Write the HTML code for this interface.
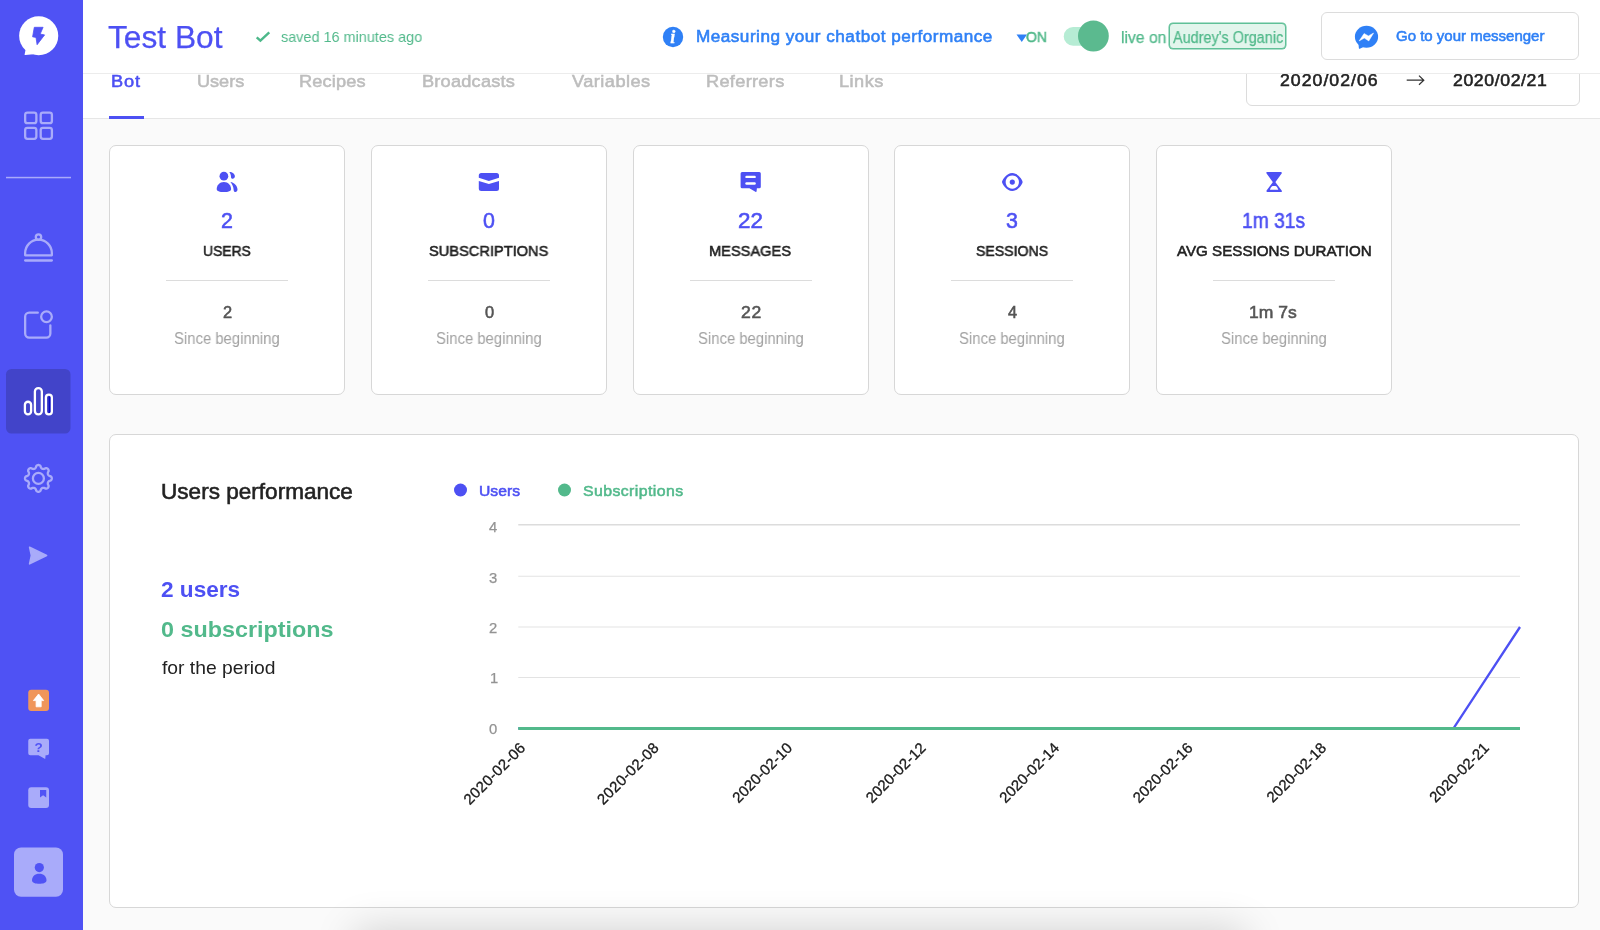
<!DOCTYPE html>
<html lang="en">
<head>
<meta charset="utf-8">
<title>Test Bot - Analytics</title>
<style>
*{box-sizing:border-box;margin:0;padding:0}
html,body{width:1600px;height:930px;overflow:hidden;background:#fafafa;font-family:"Liberation Sans",sans-serif;color:#222}
.abs,.t{position:absolute}
.t{white-space:nowrap;line-height:1;transform-origin:0 0;will-change:transform}
.m{-webkit-text-stroke:0.55px currentColor}
.l{-webkit-text-stroke:0.25px currentColor}
.b{font-weight:700}
#sidebar{position:absolute;left:0;top:0;width:83px;height:930px;background:#4f52f4}
#header{position:absolute;left:83px;top:0;width:1517px;height:74px;background:#fff;border-bottom:1px solid #ececec;z-index:5}
#tabs{position:absolute;left:83px;top:74px;width:1517px;height:45px;background:#fff;border-bottom:1px solid #e6e6e6}
.pri{color:#4d50f3}
.grn{color:#52b98b}
.blu{color:#2f80f6}
.gry{color:#bdbdbd}
.card{position:absolute;top:145px;width:236px;height:250px;background:#fff;border:1px solid #d7d7d7;border-radius:7px}
.card .hr{position:absolute;left:56px;top:134px;width:122px;height:1px;background:#dcdcdc}
#panel{position:absolute;left:109px;top:434px;width:1470px;height:474px;background:#fff;border:1px solid #d7d7d7;border-radius:7px}
</style>
</head>
<body>

<div id="sidebar">
<svg class="abs" style="left:0;top:0;will-change:transform" width="83" height="930" viewBox="0 0 83 930">
  <!-- logo -->
  <circle cx="38.7" cy="35.7" r="19.55" fill="#fff"/>
  <path d="M25.6,49.5 L24.6,54.4 Q24.5,55.2 25.4,55.1 L33.5,54.3 Z" fill="#fff"/>
  <path d="M34.3,27.3 H43.1 L40.15,34.05 L44.6,34.9 L37.1,44.7 L36,37.4 L32.6,36.85 Z" fill="#5053f5" stroke="#5053f5" stroke-width="0.8" stroke-linejoin="round"/>
  <!-- grid -->
  <g fill="none" stroke="#a9abfa" stroke-width="2.3">
    <rect x="25.15" y="112.65" width="11.2" height="10.5" rx="2.2"/>
    <rect x="40.7" y="112.65" width="11.2" height="10.5" rx="2.2"/>
    <rect x="25.15" y="127.9" width="11.2" height="10.9" rx="2.2"/>
    <rect x="40.7" y="127.9" width="11.2" height="10.9" rx="2.2"/>
  </g>
  <rect x="6" y="176.8" width="65" height="1.5" fill="#a9abfa"/>
  <!-- cloche -->
  <g fill="none" stroke="#a9abfa" stroke-width="2.3" stroke-linecap="round" stroke-linejoin="round">
    <path d="M25.15,255.35 V253 A13.35,13.35 0 0 1 51.85,253 V255.35 Z"/>
    <circle cx="38.5" cy="237.1" r="2.7"/>
    <path d="M25.15,260.5 H51.85"/>
  </g>
  <!-- notification square -->
  <g fill="none" stroke="#a9abfa" stroke-width="2.3" stroke-linecap="round">
    <path d="M37.8,312.65 H29.15 a4,4 0 0 0 -4,4 V333.6 a4,4 0 0 0 4,4 H46.35 a4,4 0 0 0 4,-4 V325.3"/>
    <circle cx="46.5" cy="316.75" r="5.35"/>
  </g>
  <!-- active analytics -->
  <rect x="6" y="369" width="64.5" height="64.5" rx="5.5" fill="#4244c9"/>
  <rect x="48.6" y="396.5" width="2.2" height="17" fill="#0a0ac4"/>
  <g fill="none" stroke="#fff" stroke-width="2.3">
    <rect x="24.9" y="401.75" width="6.2" height="12.7" rx="3.1"/>
    <rect x="34.9" y="388.05" width="6.95" height="26.4" rx="3.45"/>
    <rect x="45.9" y="394.65" width="5.95" height="19.8" rx="2.95"/>
  </g>
  <!-- gear -->
  <path d="M51.80,478.40 L51.78,478.75 L51.70,479.10 L51.58,479.44 L51.41,479.77 L51.18,480.08 L50.89,480.38 L50.48,480.64 L49.66,480.79 L49.25,481.00 L48.94,481.22 L48.68,481.45 L48.46,481.67 L48.28,481.90 L48.13,482.13 L48.01,482.38 L47.92,482.64 L47.86,482.91 L47.83,483.20 L47.82,483.52 L47.85,483.86 L47.91,484.23 L48.06,484.67 L48.53,485.36 L48.63,485.83 L48.63,486.25 L48.56,486.63 L48.45,486.99 L48.30,487.31 L48.11,487.61 L47.88,487.88 L47.61,488.11 L47.31,488.30 L46.99,488.45 L46.63,488.56 L46.25,488.63 L45.83,488.63 L45.36,488.53 L44.67,488.06 L44.23,487.91 L43.86,487.85 L43.52,487.82 L43.20,487.83 L42.91,487.86 L42.64,487.92 L42.38,488.01 L42.13,488.13 L41.90,488.28 L41.67,488.46 L41.45,488.68 L41.22,488.94 L41.00,489.25 L40.79,489.66 L40.64,490.48 L40.38,490.89 L40.08,491.18 L39.77,491.41 L39.44,491.58 L39.10,491.70 L38.75,491.78 L38.40,491.80 L38.05,491.78 L37.70,491.70 L37.36,491.58 L37.03,491.41 L36.72,491.18 L36.42,490.89 L36.16,490.48 L36.01,489.66 L35.80,489.25 L35.58,488.94 L35.35,488.68 L35.13,488.46 L34.90,488.28 L34.67,488.13 L34.42,488.01 L34.16,487.92 L33.89,487.86 L33.60,487.83 L33.28,487.82 L32.94,487.85 L32.57,487.91 L32.13,488.06 L31.44,488.53 L30.97,488.63 L30.55,488.63 L30.17,488.56 L29.81,488.45 L29.49,488.30 L29.19,488.11 L28.92,487.88 L28.69,487.61 L28.50,487.31 L28.35,486.99 L28.24,486.63 L28.17,486.25 L28.17,485.83 L28.27,485.36 L28.74,484.67 L28.89,484.23 L28.95,483.86 L28.98,483.52 L28.97,483.20 L28.94,482.91 L28.88,482.64 L28.79,482.38 L28.67,482.13 L28.52,481.90 L28.34,481.67 L28.12,481.45 L27.86,481.22 L27.55,481.00 L27.14,480.79 L26.32,480.64 L25.91,480.38 L25.62,480.08 L25.39,479.77 L25.22,479.44 L25.10,479.10 L25.02,478.75 L25.00,478.40 L25.02,478.05 L25.10,477.70 L25.22,477.36 L25.39,477.03 L25.62,476.72 L25.91,476.42 L26.32,476.16 L27.14,476.01 L27.55,475.80 L27.86,475.58 L28.12,475.35 L28.34,475.13 L28.52,474.90 L28.67,474.67 L28.79,474.42 L28.88,474.16 L28.94,473.89 L28.97,473.60 L28.98,473.28 L28.95,472.94 L28.89,472.57 L28.74,472.13 L28.27,471.44 L28.17,470.97 L28.17,470.55 L28.24,470.17 L28.35,469.81 L28.50,469.49 L28.69,469.19 L28.92,468.92 L29.19,468.69 L29.49,468.50 L29.81,468.35 L30.17,468.24 L30.55,468.17 L30.97,468.17 L31.44,468.27 L32.13,468.74 L32.57,468.89 L32.94,468.95 L33.28,468.98 L33.60,468.97 L33.89,468.94 L34.16,468.88 L34.42,468.79 L34.67,468.67 L34.90,468.52 L35.13,468.34 L35.35,468.12 L35.58,467.86 L35.80,467.55 L36.01,467.14 L36.16,466.32 L36.42,465.91 L36.72,465.62 L37.03,465.39 L37.36,465.22 L37.70,465.10 L38.05,465.02 L38.40,465.00 L38.75,465.02 L39.10,465.10 L39.44,465.22 L39.77,465.39 L40.08,465.62 L40.38,465.91 L40.64,466.32 L40.79,467.14 L41.00,467.55 L41.22,467.86 L41.45,468.12 L41.67,468.34 L41.90,468.52 L42.13,468.67 L42.38,468.79 L42.64,468.88 L42.91,468.94 L43.20,468.97 L43.52,468.98 L43.86,468.95 L44.23,468.89 L44.67,468.74 L45.36,468.27 L45.83,468.17 L46.25,468.17 L46.63,468.24 L46.99,468.35 L47.31,468.50 L47.61,468.69 L47.88,468.92 L48.11,469.19 L48.30,469.49 L48.45,469.81 L48.56,470.17 L48.63,470.55 L48.63,470.97 L48.53,471.44 L48.06,472.13 L47.91,472.57 L47.85,472.94 L47.82,473.28 L47.83,473.60 L47.86,473.89 L47.92,474.16 L48.01,474.42 L48.13,474.67 L48.28,474.90 L48.46,475.13 L48.68,475.35 L48.94,475.58 L49.25,475.80 L49.66,476.01 L50.48,476.16 L50.89,476.42 L51.18,476.72 L51.41,477.03 L51.58,477.36 L51.70,477.70 L51.78,478.05 Z" fill="none" stroke="#a9abfa" stroke-width="2.3" stroke-linejoin="round"/>
  <circle cx="38.4" cy="478.4" r="5.5" fill="none" stroke="#a9abfa" stroke-width="2.3"/>
  <!-- play -->
  <path d="M29.6,547.2 L46.6,555.5 L29.6,563.8 L31.4,555.5 Z" fill="#a9abfa" stroke="#a9abfa" stroke-width="1.6" stroke-linejoin="round"/>
  <!-- upgrade -->
  <rect x="28.25" y="689.75" width="20.75" height="21.25" rx="3" fill="#f0965a"/>
  <path d="M38.6,694 L43.7,700.6 H41.2 V706.8 H36.1 V700.6 H33.4 Z" fill="#fff" stroke="#fff" stroke-width="0.8" stroke-linejoin="round"/>
  <!-- help -->
  <path d="M30.25,738.75 H47 a2,2 0 0 1 2,2 V753.25 a2,2 0 0 1 -2,2 H45.6 L45.2,759 L38.5,755.25 H30.25 a2,2 0 0 1 -2,-2 V740.75 a2,2 0 0 1 2,-2 Z" fill="#a9abfa"/>
  <text x="38.6" y="752.3" font-family="Liberation Sans, sans-serif" font-weight="bold" font-size="13.5" text-anchor="middle" fill="#5053f5">?</text>
  <!-- docs -->
  <rect x="28.25" y="787.25" width="20.75" height="20.75" rx="3" fill="#a9abfa"/>
  <path d="M40,790 H46.25 V797.6 L43.1,795.2 L40,797.6 Z" fill="#5053f5"/>
  <!-- avatar -->
  <rect x="14" y="847.5" width="49" height="49.25" rx="7" fill="#a9abfa"/>
  <circle cx="39.3" cy="867.6" r="4.6" fill="#5053f5"/>
  <path d="M32,880.5 C32,876.2 35,873.75 39.25,873.75 C43.5,873.75 46.5,876.2 46.5,880.5 C46.5,882.9 43,883.8 39.25,883.8 C35.5,883.8 32,882.9 32,880.5 Z" fill="#5053f5"/>
</svg>
</div>

<div id="header">
  <div class="t pri l" style="left:25.48px;top:22px;font-size:31px;transform:scaleX(1.0225)">Test Bot</div>
  <div class="t grn" style="left:198.04px;top:29px;font-size:15px;transform:scaleX(0.9621)">saved 16 minutes ago</div>
  <div class="t blu m" style="left:613.18px;top:29px;font-size:16px;letter-spacing:0.469px;transform:scaleX(1.07)">Measuring your chatbot performance</div>
  <div class="t grn m" style="left:942.5px;top:30px;font-size:14.5px;transform:scaleX(0.9643)">ON</div>
  <div class="t grn l" style="left:1037.77px;top:30px;font-size:16px;transform:scaleX(0.983)">live on</div>
  <div class="abs" style="left:1086px;top:23px;width:117px;height:26px;border:1px solid #5fc097;background:#e2f5ec;border-radius:4px;box-shadow:0 0 0 .5px #5fc097"></div>
  <div class="abs" style="left:1238px;top:12px;width:258px;height:48px;border:1px solid #dcdcdc;border-radius:6px;background:#fff"></div>
  <svg class="abs" style="left:0;top:0;will-change:transform" width="1517" height="74" viewBox="83 0 1517 74">
    <path d="M257.6,38.1 L260.4,40.65 L268.4,33.1" fill="none" stroke="#4db88a" stroke-width="2.4" stroke-linecap="square" stroke-linejoin="miter"/>
    <circle cx="673" cy="37" r="10.2" fill="#2f80f6"/>
    <text x="672.7" y="43" font-family="Liberation Serif, serif" font-style="italic" font-weight="bold" font-size="18" text-anchor="middle" fill="#fff" stroke="#fff" stroke-width="0.3">i</text>
    <path d="M1016.5,34.5 H1027 L1021.75,42 Z" fill="#2f80f6"/>
    <rect x="1063.75" y="27" width="38" height="18.75" rx="9.4" fill="#b6ecd4"/>
    <circle cx="1093.4" cy="36" r="15.4" fill="#5bba8f"/>
    <ellipse cx="1366.5" cy="36.8" rx="11.6" ry="10.95" fill="#2f80f6"/>
    <path d="M1358.5,44.5 L1358.9,48.3 Q1359,49.1 1359.8,48.7 L1363.5,47 Z" fill="#2f80f6"/>
    <path d="M1359.15,40.9 L1364.1,33.55 L1368.4,35.9 L1373.55,33.1 L1368.8,40.9 L1364.3,38.1 Z" fill="#fff" stroke="#fff" stroke-width="0.5" stroke-linejoin="round"/>
  </svg>
  <div class="t grn l" style="left:1090.0px;top:30px;font-size:16px;transform:scaleX(0.9016)">Audrey's Organic</div>
  <div class="t blu m" style="left:1312.5px;top:28px;font-size:15px">Go to your messenger</div>
</div>

<div id="tabs">
  <div class="abs" style="left:26px;top:42px;width:35px;height:3px;background:#4d50f3"></div>
  <div class="abs" style="left:1163px;top:-20px;width:334px;height:52px;border:1px solid #dcdcdc;border-radius:6px;background:#fff"></div>
  <svg class="abs" style="left:1320px;top:0" width="24" height="14" viewBox="1403 74 24 14"><path d="M1406.7,80.2 H1423.6 M1419,75.6 L1423.8,80.2 L1419,84.8" fill="none" stroke="#333" stroke-width="1.2"/></svg>
  <div class="t pri m" style="left:28.27px;top:-1px;font-size:17px;letter-spacing:0.818px;transform:scaleX(1.07)">Bot</div>
  <div class="t gry m" style="left:113.94px;top:-1px;font-size:17px;transform:scaleX(1.064)">Users</div>
  <div class="t gry m" style="left:215.8px;top:-1px;font-size:17px;letter-spacing:0.125px;transform:scaleX(1.07)">Recipes</div>
  <div class="t gry m" style="left:338.83px;top:-1px;font-size:17px;letter-spacing:0.194px;transform:scaleX(1.07)">Broadcasts</div>
  <div class="t gry m" style="left:488.7px;top:-1px;font-size:17px;letter-spacing:0.429px;transform:scaleX(1.07)">Variables</div>
  <div class="t gry m" style="left:622.54px;top:-1px;font-size:17px;letter-spacing:0.283px;transform:scaleX(1.07)">Referrers</div>
  <div class="t gry m" style="left:755.78px;top:-1px;font-size:17px;letter-spacing:0.43px;transform:scaleX(1.07)">Links</div>
  <div class="t m" style="left:1196.82px;top:-2px;font-size:16.5px;letter-spacing:0.962px;transform:scaleX(1.07)">2020/02/06</div>
  <div class="t m" style="left:1369.58px;top:-2px;font-size:16.5px;letter-spacing:0.572px;transform:scaleX(1.07)">2020/02/21</div>
</div>

<div class="card" style="left:109px">
  <svg class="abs" style="left:0;top:0" width="234" height="60" viewBox="110 146 234 60">
    <g fill="#4d50f3">
      <circle cx="223.9" cy="176.2" r="4.35"/>
      <path d="M223.9,182.1 C219.5,182.1 216.7,185.6 216.7,189 C216.7,191.2 219.7,192.1 223.9,192.1 C228.1,192.1 231.1,191.2 231.1,189 C231.1,185.6 228.3,182.1 223.9,182.1 Z"/>
      <path d="M229.3,171.9 C232.5,171.9 234.9,174 234.9,176.3 C234.9,177.8 233.8,178.8 232.7,178.8 C231.6,178.8 231,178 231,176.9 C231,174.9 230.3,173.2 229.3,171.9 Z"/>
      <path d="M230.4,182.1 C234.5,182.6 237.5,186.2 237.5,189.6 C237.5,191 236.6,192 235.4,192 C234.4,192 233.8,191.3 233.7,190.2 C233.5,187 232.3,184.2 230.4,182.1 Z"/>
    </g>
  </svg>
  <div class="hr"></div>
  <div class="t pri m" style="left:111.0px;top:65px;font-size:21.4px">2</div>
  <div class="t m" style="left:93.06px;top:98px;font-size:14.8px;transform:scaleX(0.9388)">USERS</div>
  <div class="t m" style="left:112.5px;top:158px;font-size:16.4px;color:#555">2</div>
  <div class="t" style="left:64.07px;top:185px;font-size:16px;transform:scaleX(0.9286);color:#a2a2a2">Since beginning</div>
</div>
<div class="card" style="left:371px">
  <svg class="abs" style="left:0;top:0" width="234" height="60" viewBox="372 146 234 60">
    <g fill="#4d50f3">
      <path d="M478.8,175.6 a2.5,2.5 0 0 1 2.5,-2.5 H496.5 a2.5,2.5 0 0 1 2.5,2.5 V177.8 L488.9,180.9 L478.8,177.8 Z"/>
      <path d="M478.8,181 L488.9,184 L499,181 V188.5 a2.5,2.5 0 0 1 -2.5,2.5 H481.3 a2.5,2.5 0 0 1 -2.5,-2.5 Z"/>
    </g>
  </svg>
  <div class="hr"></div>
  <div class="t pri m" style="left:111.0px;top:65px;font-size:21.4px">0</div>
  <div class="t m" style="left:57.26px;top:98px;font-size:14.8px;transform:scaleX(0.9874)">SUBSCRIPTIONS</div>
  <div class="t m" style="left:112.5px;top:158px;font-size:16.4px;color:#555">0</div>
  <div class="t" style="left:64.07px;top:185px;font-size:16px;transform:scaleX(0.9286);color:#a2a2a2">Since beginning</div>
</div>
<div class="card" style="left:633px">
  <svg class="abs" style="left:0;top:0" width="234" height="60" viewBox="634 146 234 60">
    <path d="M742.1,172 H759.3 a1.5,1.5 0 0 1 1.5,1.5 V186.7 a1.5,1.5 0 0 1 -1.5,1.5 H756.9 L756.6,191.3 Q756.4,192.4 755.4,191.8 L749.4,188.2 H742.1 a1.5,1.5 0 0 1 -1.5,-1.5 V173.5 a1.5,1.5 0 0 1 1.5,-1.5 Z" fill="#4d50f3"/>
    <rect x="745.3" y="175.7" width="10.5" height="2.4" rx="1.2" fill="#fff"/>
    <rect x="745.3" y="182.2" width="10.5" height="2.5" rx="1.2" fill="#fff"/>
  </svg>
  <div class="hr"></div>
  <div class="t pri m" style="left:103.95px;top:65px;font-size:21.4px;transform:scaleX(1.0455)">22</div>
  <div class="t m" style="left:75.01px;top:98px;font-size:14.8px;transform:scaleX(0.9878)">MESSAGES</div>
  <div class="t m" style="left:106.87px;top:158px;font-size:16.4px;letter-spacing:0.692px;transform:scaleX(1.07);color:#555">22</div>
  <div class="t" style="left:63.57px;top:185px;font-size:16px;transform:scaleX(0.9286);color:#a2a2a2">Since beginning</div>
</div>
<div class="card" style="left:894px">
  <svg class="abs" style="left:0;top:0" width="234" height="60" viewBox="895 146 234 60">
    <path fill-rule="evenodd" fill="#4d50f3" d="M1002,182.05 C1002,180.6 1006.2,173.1 1012.3,173.1 C1018.4,173.1 1022.65,180.6 1022.65,182.05 C1022.65,183.5 1018.4,191 1012.3,191 C1006.2,191 1002,183.5 1002,182.05 Z M1012.3,175.4 a6.65,6.65 0 1 0 0.001,0 Z"/>
    <circle cx="1012.3" cy="182.05" r="2.6" fill="#4d50f3"/>
  </svg>
  <div class="hr"></div>
  <div class="t pri m" style="left:111.0px;top:65px;font-size:21.4px">3</div>
  <div class="t m" style="left:80.74px;top:98px;font-size:14.8px;transform:scaleX(0.9541)">SESSIONS</div>
  <div class="t m" style="left:112.5px;top:158px;font-size:16.4px;color:#555">4</div>
  <div class="t" style="left:64.07px;top:185px;font-size:16px;transform:scaleX(0.9286);color:#a2a2a2">Since beginning</div>
</div>
<div class="card" style="left:1156px">
  <svg class="abs" style="left:0;top:0" width="234" height="60" viewBox="1157 146 234 60">
    <path d="M1267.4,172.9 H1280.85 L1274.1,182.15 Z" fill="#4d50f3" stroke="#4d50f3" stroke-width="2" stroke-linejoin="round"/>
    <path fill-rule="evenodd" d="M1274.1,182.15 L1280.85,191.1 H1267.4 Z" fill="#4d50f3" stroke="#4d50f3" stroke-width="2" stroke-linejoin="round"/>
    <path d="M1269.9,189.7 C1270.8,187.5 1271.6,186 1272.9,186 H1275.3 C1276.6,186 1277.4,187.5 1278.3,189.7 Z" fill="#fff"/>
  </svg>
  <div class="hr"></div>
  <div class="t pri m" style="left:84.6px;top:65px;font-size:21.4px;transform:scaleX(0.8986)">1m 31s</div>
  <div class="t m" style="left:19.75px;top:98px;font-size:14.8px;transform:scaleX(1.0238)">AVG SESSIONS DURATION</div>
  <div class="t m" style="left:92.43px;top:158px;font-size:16.4px;transform:scaleX(1.0698);color:#555">1m 7s</div>
  <div class="t" style="left:63.57px;top:185px;font-size:16px;transform:scaleX(0.9286);color:#a2a2a2">Since beginning</div>
</div>

<div id="panel">
  <svg class="abs" style="left:0;top:0;will-change:transform" width="1469" height="472" viewBox="110 435 1469 472">
    <circle cx="460.5" cy="490" r="6.5" fill="#4d50f3"/>
    <circle cx="564.5" cy="490" r="6.5" fill="#52b98b"/>
    <path d="M518.25,524.75 H1520" stroke="#dcdcdc" stroke-width="1.6" fill="none"/>
    <path d="M518.25,576.25 H1520 M518.25,627 H1520 M518.25,677.5 H1520" stroke="#e3e3e3" stroke-width="1.1" fill="none"/>
    <path d="M518.25,728.4 H1453.5 L1520,627" stroke="#4d50f3" stroke-width="2.3" fill="none" stroke-linejoin="round"/>
    <path d="M518.25,728.4 H1520" stroke="#52b98b" stroke-width="3" fill="none"/>
    <g font-family="Liberation Sans, sans-serif" font-size="15" fill="#1a1a1a" stroke="#1a1a1a" stroke-width="0.3" text-anchor="end">
      <text x="526.25" y="748.9" textLength="80" lengthAdjust="spacing" transform="rotate(-45 526.25 748.9)">2020-02-06</text>
      <text x="659.75" y="748.9" textLength="80" lengthAdjust="spacing" transform="rotate(-45 659.75 748.9)">2020-02-08</text>
      <text x="793.25" y="748.9" textLength="77.5" lengthAdjust="spacing" transform="rotate(-45 793.25 748.9)">2020-02-10</text>
      <text x="926.75" y="748.9" textLength="77.5" lengthAdjust="spacing" transform="rotate(-45 926.75 748.9)">2020-02-12</text>
      <text x="1060.25" y="748.9" textLength="77.5" lengthAdjust="spacing" transform="rotate(-45 1060.25 748.9)">2020-02-14</text>
      <text x="1193.75" y="748.9" textLength="77.5" lengthAdjust="spacing" transform="rotate(-45 1193.75 748.9)">2020-02-16</text>
      <text x="1327.25" y="748.9" textLength="77" lengthAdjust="spacing" transform="rotate(-45 1327.25 748.9)">2020-02-18</text>
      <text x="1490" y="748.9" textLength="77" lengthAdjust="spacing" transform="rotate(-45 1490 748.9)">2020-02-21</text>
    </g>
  </svg>
  <div class="t m" style="left:50.95px;top:47px;font-size:21.5px;transform:scaleX(1.0497)">Users performance</div>
  <div class="t pri m" style="left:368.94px;top:49px;font-size:14.8px;transform:scaleX(1.0608)">Users</div>
  <div class="t grn m" style="left:473.08px;top:49px;font-size:14.8px;letter-spacing:0.396px;transform:scaleX(1.07)">Subscriptions</div>
  <div class="t pri b" style="left:50.88px;top:144px;font-size:22.6px">2 users</div>
  <div class="t grn b" style="left:50.97px;top:184px;font-size:22.6px;transform:scaleX(1.0333)">0 subscriptions</div>
  <div class="t" style="left:52.0px;top:224px;font-size:18.5px;transform:scaleX(1.0417)">for the period</div>
  <div class="t l" style="left:379.25px;top:85px;font-size:14.8px;color:#939393">4</div>
  <div class="t l" style="left:378.75px;top:136px;font-size:14.8px;color:#939393">3</div>
  <div class="t l" style="left:378.75px;top:186px;font-size:14.8px;color:#939393">2</div>
  <div class="t l" style="left:379.75px;top:236px;font-size:14.8px;color:#939393">1</div>
  <div class="t l" style="left:379.25px;top:287px;font-size:14.8px;color:#939393">0</div>
</div>

<div class="abs" style="left:365px;top:940px;width:870px;height:40px;box-shadow:0 0 40px 10px rgba(0,0,0,0.17);z-index:9"></div>

</body>
</html>
